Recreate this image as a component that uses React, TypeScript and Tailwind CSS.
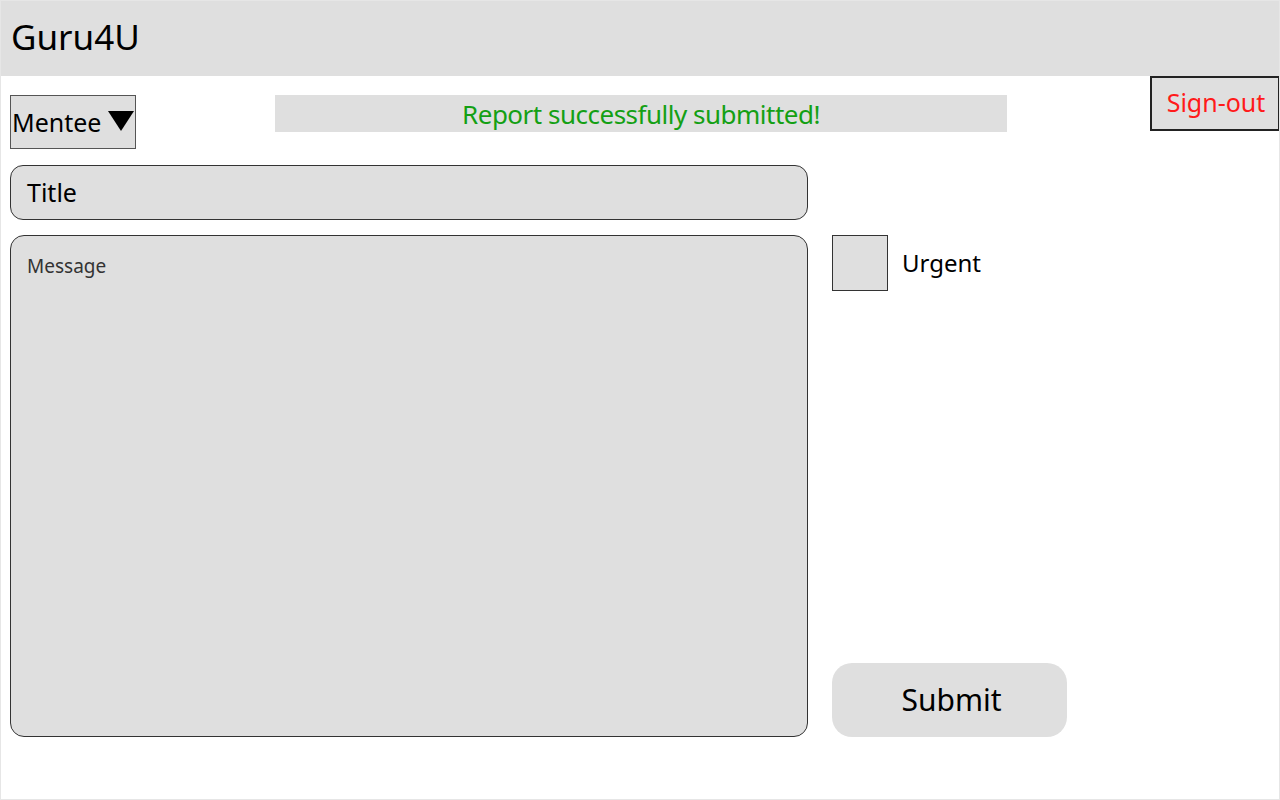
import React from "react";

export default function App() {
  return (
    <div
      className="w-[1280px] h-[800px] bg-white border border-[#e6e6e6] relative overflow-hidden text-black"
      style={{ fontFamily: '"Noto Sans", "Open Sans", sans-serif' }}
    >
      <header className="h-[75px] bg-[#dfdfdf] flex items-center pl-[10px] pb-[5px]">
        <h1 className="text-[35px] leading-none font-normal">Guru4U</h1>
      </header>
      <div className="flex items-start">
        <div className="ml-[9px] mt-[19px] w-[126px] h-[54px] border border-[#555] bg-[#dfdfdf] relative">
          <span className="absolute left-[1px] top-[14px] text-[25px] leading-none">Mentee</span>
          <svg width="26" height="20" viewBox="0 0 26 20" className="absolute right-[1px] top-[15px]">
            <polygon points="0,0 26,0 13,20" fill="#000" />
          </svg>
        </div>
        <div className="ml-[139px] mt-[19px] w-[732px] h-[37px] bg-[#dfdfdf] flex items-center justify-center">
          <span className="text-[26px] leading-none text-[#14a014] tracking-[-0.5px]">Report successfully submitted!</span>
        </div>
        <div className="ml-auto -mr-[1px] w-[130px] h-[55px] border-2 border-[#222] bg-[#dfdfdf] flex items-center justify-center pl-[2px] pb-[2px]">
          <span className="text-[25px] leading-none text-[#ff1a1a]">Sign-out</span>
        </div>
      </div>
      <div className="flex mt-[16px] ml-[9px] gap-[24px]">
        <div className="flex flex-col gap-[15px]">
          <div className="w-[798px] h-[55px] rounded-[13px] border border-[#333] bg-[#dfdfdf] flex items-center pl-[16px]">
            <span className="text-[25px] leading-none">Title</span>
          </div>
          <div className="w-[798px] h-[502px] rounded-[14px] border border-[#333] bg-[#dfdfdf] pl-[16px] pt-[19px]">
            <span className="text-[19px] leading-none text-[#333]">Message</span>
          </div>
        </div>
        <div className="flex flex-col justify-between pt-[70px]">
          <div className="flex items-center gap-[14px]">
            <div className="w-[56px] h-[56px] border border-[#333] bg-[#dfdfdf]" />
            <span className="text-[24px] leading-none">Urgent</span>
          </div>
          <div className="w-[235px] h-[74px] rounded-[20px] bg-[#dfdfdf] flex items-center justify-center pl-[4px]">
            <span className="text-[30px] leading-none">Submit</span>
          </div>
        </div>
      </div>
    </div>
  );
}
